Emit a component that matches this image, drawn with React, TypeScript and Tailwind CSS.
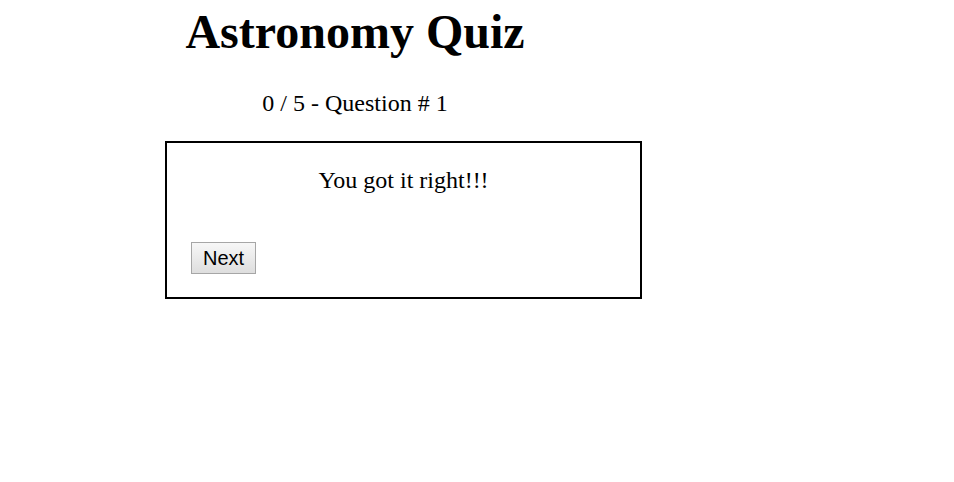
import React from 'react'

const App = () => {
    return (
        <div className="min-h-[482px] bg-white text-black font-['Liberation_Serif',serif]">
            <div className="w-[710px] pt-[4px] text-center">
                <h1 className="text-[48px] font-bold leading-[55px]">Astronomy Quiz</h1>
                <p className="mt-[30px] text-[24px] leading-[28px]">0 / 5 - Question # 1</p>
            </div>
            <div className="ml-[165px] mt-[24px] w-[477px] h-[158px] border-2 border-black px-[24px] pt-[23px]">
                <p className="text-center text-[24px] leading-[28px]">You got it right!!!</p>
                <button className="mt-[48px] h-[32px] w-[65px] border border-[#a6a6a6] bg-gradient-to-b from-[#f7f7f7] to-[#dedede] font-['Liberation_Sans',sans-serif] text-[20px] leading-none text-black">
                    Next
                </button>
            </div>
        </div>
    )
}

export default App
